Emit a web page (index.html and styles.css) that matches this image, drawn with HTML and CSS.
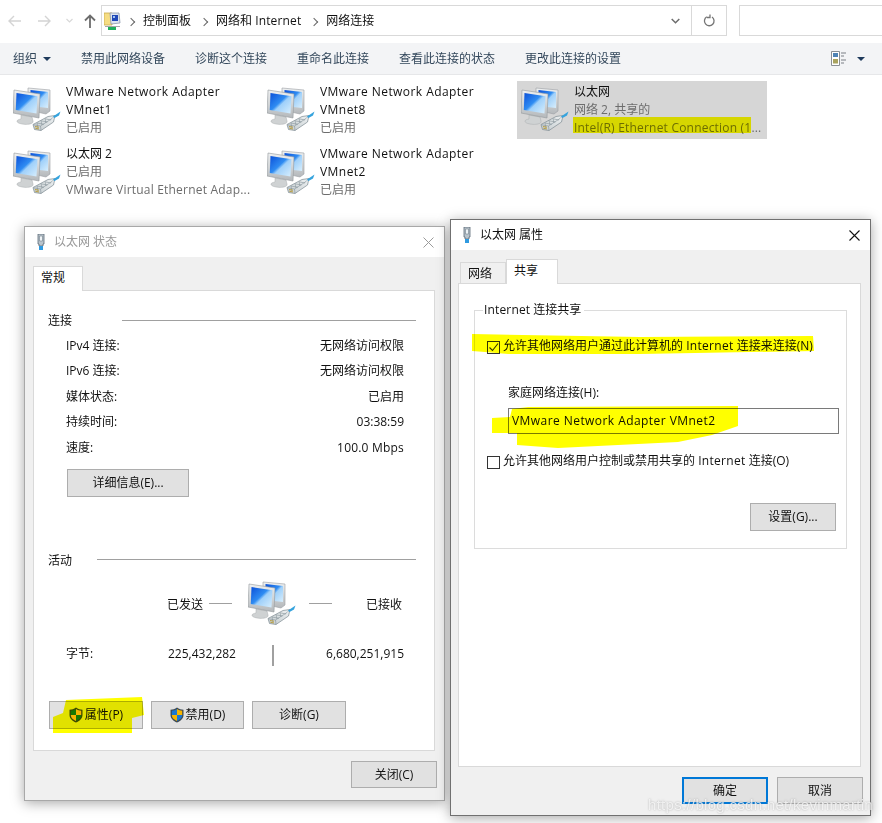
FILE: index.html
```html
<!DOCTYPE html>
<html lang="zh-CN">
<head>
<meta charset="utf-8">
<title>网络连接</title>
<link rel="stylesheet" href="styles.css">
</head>
<body>
<svg class="sprite" width="0" height="0" aria-hidden="true">
  <defs>
    <linearGradient id="scr" x1="0" y1="0" x2="1" y2="1">
      <stop offset="0" stop-color="#0a4fd8"/><stop offset=".45" stop-color="#2f8cf2"/><stop offset=".55" stop-color="#9fd0fa"/><stop offset="1" stop-color="#d8eefc"/>
    </linearGradient>
    <linearGradient id="frm" x1="0" y1="0" x2="0" y2="1">
      <stop offset="0" stop-color="#eef0f1"/><stop offset="1" stop-color="#b4b8bb"/>
    </linearGradient>
    <linearGradient id="plg" x1="0" y1="1" x2="1" y2="0">
      <stop offset="0" stop-color="#c3cbce"/><stop offset="1" stop-color="#eef1f2"/>
    </linearGradient>
    <symbol id="net" viewBox="0 0 48 48">
      <path d="M15 2 37 4 37 25 33 28 15 24Z" fill="url(#frm)" stroke="#9a9ea2" stroke-width=".6"/>
      <path d="M17.5 4 35 6 35 22 17.5 20Z" fill="url(#scr)"/>
      <path d="M8 29 19 31 20 35 C21 38 14 39 9 38 C3 37 2 34 8 33Z" fill="#cfd2d3" stroke="#a9acae" stroke-width=".5"/>
      <path d="M1 4 27 8 26 32 0 27Z" fill="url(#frm)" stroke="#94989c" stroke-width=".6"/>
      <path d="M3.5 7 24.5 10.200 23.500 27.500 2.800 24Z" fill="url(#scr)"/>
      <path d="M20 38.500 35 30.500 42 29.500 40.500 36 28 44.500 21.500 43.500Z" fill="url(#plg)" stroke="#7d8a90" stroke-width=".7"/>
      <path d="M20.500 38.800 27.500 40 28 44.500M27.500 40 39 32.500 42 29.500M24 37 31 38.300M28 34.800 34.500 36M32 32.800 38 34M24 37 24.800 42M28 34.800 29 39M32 32.800 33 37" fill="none" stroke="#87949a" stroke-width=".6"/>
      <path d="M22 40.500 26 41.200M22.300 42.200 26 43" stroke="#b9a046" stroke-width="1"/>
      <path d="M40 30.500 47.500 25.500 46 29.500 41.500 32Z" fill="#35a3dd"/>
    </symbol>
    <symbol id="plug" viewBox="0 0 10 16">
      <path d="M2 0H8V10H7V12H3V10H2Z" fill="#b9c4cc" stroke="#5c6b76" stroke-width=".8"/>
      <path d="M3.500 2H6.500V7H3.500Z" fill="#eef3f6" stroke="#71808a" stroke-width=".6"/>
      <path d="M3 12H7V16H3Z" fill="#2f9ae0"/>
    </symbol>
    <symbol id="shield" viewBox="0 0 14 16">
      <path d="M7 .5C9 2 11.500 2.700 13.500 2.700V8C13.500 11.500 10.500 14 7 15.500 3.500 14 .5 11.500 .5 8V2.700C2.500 2.700 5 2 7 .5Z" fill="#3d4a55"/>
      <path d="M7 2V8H1.800V3.700C3.500 3.600 5.500 3 7 2Z" fill="#1a78d2"/>
      <path d="M7 2C8.500 3 10.500 3.600 12.200 3.700V8H7Z" fill="#f7b500"/>
      <path d="M1.800 8H7V14C4.300 12.800 1.800 11 1.800 8Z" fill="#f7b500"/>
      <path d="M7 8H12.200C12.200 11 9.700 12.800 7 14Z" fill="#1a78d2"/>
    </symbol>
  </defs>
</svg>

<main class="desktop">
  <header class="addressbar">
    <nav class="nav">
      <svg class="nav-back" width="14" height="12" viewBox="0 0 14 12"><path d="M6 1 1 6 6 11M1 6H13" fill="none" stroke="#d4d4d4" stroke-width="1.400"/></svg>
      <svg class="nav-fwd" width="14" height="12" viewBox="0 0 14 12"><path d="M8 1 13 6 8 11M13 6H1" fill="none" stroke="#d4d4d4" stroke-width="1.400"/></svg>
      <svg class="nav-down" width="7" height="5" viewBox="0 0 7 5"><path d="M.5 1 3.500 4 6.500 1" fill="none" stroke="#d8d8d8" stroke-width="1.200"/></svg>
      <svg class="nav-up" width="12" height="14" viewBox="0 0 12 14"><path d="M1 6.500 6 1.500 11 6.500M6 2V14" fill="none" stroke="#6d6d6d" stroke-width="1.800"/></svg>
    </nav>
    <div class="address">
      <svg class="addr-icon" width="17" height="18" viewBox="0 0 17 18">
        <path d="M0 1H8V13H0Z" fill="#f6dd83" stroke="#c9a94b" stroke-width=".8"/>
        <path d="M6 1H15L16 11 7 12Z" fill="#dbe3ef" stroke="#8c98ad" stroke-width=".8"/>
        <path d="M8 3H14V9H8Z" fill="#1f47b8"/>
        <path d="M9 4H11V6H9Z" fill="#9fc4f2"/>
        <path d="M1 14H16V15H1Z" fill="#a8a8a8"/>
        <path d="M4 15H12V18H4Z" fill="#1faf5c"/>
      </svg>
      <ol class="crumbs">
        <li class="crumb">控制面板</li>
        <li class="crumb">网络和 <span class="lat-s">Internet</span></li>
        <li class="crumb">网络连接</li>
      </ol>
      <svg class="addr-chev" width="9" height="6" viewBox="0 0 9 6"><path d="M.7 1 4.500 4.800 8.300 1" fill="none" stroke="#6d6d6d" stroke-width="1.500"/></svg>
      <div class="refresh">
        <svg width="12" height="13" viewBox="0 0 12 13"><path d="M8.200 2.800A4.800 4.800 0 1 1 3 3M5 .5V3.500H8" transform="matrix(-1 0 0 1 12 0)" fill="none" stroke="#757575" stroke-width="1.300"/></svg>
      </div>
    </div>
    <div class="search"></div>
  </header>

  <div class="toolbar">
    <span class="tool tool-org">组织<i class="caret"></i></span>
    <span class="tool">禁用此网络设备</span>
    <span class="tool">诊断这个连接</span>
    <span class="tool">重命名此连接</span>
    <span class="tool">查看此连接的状态</span>
    <span class="tool">更改此连接的设置</span>
    <span class="tool-view">
      <svg width="16" height="15" viewBox="0 0 16 15">
        <path d="M.5.5H8.500V14.500H.5Z" fill="#fff" stroke="#8a8f94"/>
        <path d="M2 2H7V6H2Z" fill="#4f83b5"/><path d="M2 8H7V12.500H2Z" fill="#a9a35e"/>
        <path d="M10 2H15M10 5H13M10 9H15M10 12H13" stroke="#7a7f85"/>
      </svg>
      <i class="caret"></i>
    </span>
  </div>

  <section class="connections">
    <article class="conn">
      <svg class="conn-icon"><use href="#net"/></svg>
      <div class="conn-text"><div class="lat">VMware Network Adapter</div><div class="lat">VMnet1</div><div class="muted">已启用</div></div>
    </article>
    <article class="conn">
      <svg class="conn-icon"><use href="#net"/></svg>
      <div class="conn-text"><div class="lat">VMware Network Adapter</div><div class="lat">VMnet8</div><div class="muted">已启用</div></div>
    </article>
    <article class="conn conn-selected">
      <svg class="conn-icon"><use href="#net"/></svg>
      <div class="conn-text"><div>以太网</div><div class="muted">网络 2, 共享的</div><div class="muted lat-m">Intel(R) Ethernet Connection (1...</div></div>
    </article>
    <article class="conn conn-low">
      <svg class="conn-icon"><use href="#net"/></svg>
      <div class="conn-text"><div>以太网 2</div><div class="muted">已启用</div><div class="muted lat-m">VMware Virtual Ethernet Adap...</div></div>
    </article>
    <article class="conn conn-low">
      <svg class="conn-icon"><use href="#net"/></svg>
      <div class="conn-text"><div class="lat">VMware Network Adapter</div><div class="lat">VMnet2</div><div class="muted">已启用</div></div>
    </article>
  </section>

  <section class="dialog dialog-status">
    <div class="titlebar titlebar-inactive">
      <svg class="title-icon"><use href="#plug"/></svg>
      <span class="title-text">以太网 状态</span>
      <svg class="title-close" width="11" height="11" viewBox="0 0 11 11"><path d="M.5.5 10.500 10.500M10.500.5 .5 10.500" stroke="#9a9a9a"/></svg>
    </div>
    <div class="tabs tabs-status"><span class="tab tab-active">常规</span></div>
    <div class="panel panel-status">
      <div class="group-head"><span class="group-name name-conn">连接</span><span class="rule"></span></div>
      <dl class="stats">
        <div class="stat"><dt>IPv4 连接:</dt><dd>无网络访问权限</dd></div>
        <div class="stat"><dt>IPv6 连接:</dt><dd>无网络访问权限</dd></div>
        <div class="stat"><dt>媒体状态:</dt><dd>已启用</dd></div>
        <div class="stat"><dt>持续时间:</dt><dd>03:38:59</dd></div>
        <div class="stat"><dt>速度:</dt><dd class="lat-m">100.0 Mbps</dd></div>
      </dl>
      <button class="btn btn-details">详细信息(E)...</button>
      <div class="group-head group-activity"><span class="group-name name-act">活动</span><span class="rule"></span></div>
      <div class="traffic">
        <span class="traffic-label">已发送</span>
        <span class="dash dash-left"></span>
        <svg class="traffic-icon"><use href="#net"/></svg>
        <span class="dash dash-right"></span>
        <span class="traffic-label traffic-recv">已接收</span>
      </div>
      <div class="bytes">
        <span class="bytes-label">字节:</span>
        <span class="bytes-sent">225,432,282</span>
        <span class="bytes-sep"></span>
        <span class="bytes-recv">6,680,251,915</span>
      </div>
      <div class="actions">
        <button class="btn btn-act"><svg class="shield"><use href="#shield"/></svg>属性(P)</button>
        <button class="btn btn-act btn-mid"><svg class="shield"><use href="#shield"/></svg>禁用(D)</button>
        <button class="btn btn-act">诊断(G)</button>
      </div>
    </div>
    <div class="footer footer-status"><button class="btn btn-foot">关闭(C)</button></div>
  </section>

  <section class="dialog dialog-props">
    <div class="titlebar">
      <svg class="title-icon"><use href="#plug"/></svg>
      <span class="title-text title-active">以太网 属性</span>
      <svg class="title-close" width="11" height="11" viewBox="0 0 11 11"><path d="M.5.5 10.500 10.500M10.500.5 .5 10.500" stroke="#111" stroke-width="1.100"/></svg>
    </div>
    <div class="tabs tabs-props"><span class="tab tab-idle">网络</span><span class="tab tab-active tab-share">共享</span></div>
    <div class="panel panel-props">
      <fieldset class="share">
        <legend class="share-legend"><span class="lat-s">Internet</span> 连接共享</legend>
        <label class="check check-first"><span class="box box-on"><svg width="11" height="11" viewBox="0 0 11 11"><path d="M1.500 5.500 4.500 8.500 10 1.500" fill="none" stroke="#333" stroke-width="1.100"/></svg></span>允许其他网络用户通过此计算机的 <span class="lat-w">Internet</span> 连接来连接(N)</label>
        <div class="home-label">家庭网络连接(H):</div>
        <div class="home-input lat">VMware Network Adapter VMnet2</div>
        <label class="check check-second"><span class="box"></span>允许其他网络用户控制或禁用共享的 <span class="lat-w">Internet</span> 连接(O)</label>
        <button class="btn btn-settings">设置(G)...</button>
      </fieldset>
    </div>
    <div class="footer footer-props">
      <button class="btn btn-foot btn-default">确定</button>
      <button class="btn btn-foot">取消</button>
    </div>
  </section>

  <svg class="marker" width="882" height="823" viewBox="0 0 882 823" aria-hidden="true">
    <path class="ink" d="M66 700 142 697 144 715 132 718 132 733 53 733 53 717 63 713Z"/>
    <path class="ink" d="M472 334 640 337 813 336 814 351 640 354 508 354 485 352 472 351Z"/>
    <path class="ink" d="M528 407 738 406 738 426 712 435 678 442 558 448 517 445 517 433 492 433 492 418 510 417 512 409Z"/>
    <path class="ink" d="M573 117H751V133H573Z"/>
  </svg>

  <div class="watermark">https://blog.csdn.net/kevinmartin</div>
</main>
</body>
</html>
```

FILE: styles.css
```css
* { box-sizing: border-box; }
html, body { margin: 0; padding: 0; background: #fff; }
body {
  font-family: "Open Sans", "Noto Sans CJK SC", sans-serif;
  font-size: 12px;
  line-height: 18px;
  color: #111;
}
.sprite { position: absolute; }
.desktop { position: relative; width: 882px; height: 823px; overflow: hidden; }
.lat { letter-spacing: .44px; }
.lat-m { letter-spacing: .2px; }
.lat-s { letter-spacing: .15px; }
.lat-w { letter-spacing: .3px; }
.muted { color: #6d6d6d; }

/* address bar */
.addressbar { display: flex; height: 43px; padding-top: 5px; }
.nav { position: relative; display: flex; align-items: center; width: 101px; height: 31px; padding-left: 8px; }
.nav-fwd { margin-left: 15px; }
.nav-down { margin-left: 15px; }
.nav-up { margin-left: 11px; }
.address { display: flex; align-items: center; width: 626px; height: 31px; border: 1px solid #d9d9d9; padding-left: 2px; }
.addr-icon { flex: none; }
.crumbs { display: flex; list-style: none; margin: 0; padding: 0; flex: 1; }
.crumb { position: relative; margin-left: 22px; }
.crumb + .crumb { margin-left: 25px; }
.crumb::before {
  content: "";
  position: absolute;
  left: -15px; top: 7px;
  width: 5px; height: 5px;
  border-top: 1px solid #666;
  border-right: 1px solid #666;
  transform: rotate(45deg);
}
.addr-chev { margin-right: 11px; }
.refresh { display: flex; align-items: center; justify-content: center; width: 35px; height: 100%; border-left: 1px solid #d9d9d9; }
.search { width: 143px; height: 31px; margin-left: 12px; border: 1px solid #d9d9d9; border-right: 0; }

/* toolbar */
.toolbar { display: flex; align-items: center; gap: 30px; height: 32px; padding: 0 17px 0 13px; background: #f3f4f6; border-bottom: 1px solid #e6e7e9; color: #33475b; }
.tool-org { display: flex; align-items: center; width: 38px; }
.caret { display: inline-block; width: 0; height: 0; border: 4px solid transparent; border-top: 4px solid #1f3a5c; border-bottom: 0; }
.tool-org .caret { margin-left: 6px; }
.tool-view { display: flex; align-items: center; margin-left: auto; gap: 10px; }

/* connection tiles */
.connections { display: grid; grid-template-columns: repeat(3, 250px); grid-auto-rows: 58px; gap: 5px 4px; padding: 6px 0 0 9px; }
.conn { display: flex; padding: 2px 0 0 4px; }
.conn-low { padding-top: 1px; }
.conn-low .conn-icon { margin-top: 4px; }
.conn-selected { background: #d6d6d6; }
.conn-icon { flex: none; width: 48px; height: 48px; margin: 3px 5px 0 0; }
.conn-text { white-space: nowrap; }

/* dialogs: windows on a desktop */
.dialog { position: absolute; display: flex; flex-direction: column; width: 421px; background: #f0f0f0; box-shadow: 0 2px 12px rgba(0,0,0,.35); }
.dialog-status { left: 24px; top: 226px; height: 575px; border: 1px solid #a8a8a8; }
.dialog-props { left: 450px; top: 219px; height: 597px; border: 1px solid #707070; }
.titlebar { display: flex; align-items: center; flex: none; height: 30px; background: #fff; padding: 0 10px 0 11px; }
.title-icon { width: 10px; height: 16px; margin-right: 8px; }
.titlebar-inactive { height: 30px; color: #999; }
.title-text { flex: 1; }
.title-active { color: #111; }
.tabs { display: flex; align-items: flex-end; flex: none; }
.tabs-status { height: 33px; padding-left: 8px; }
.tabs-props { height: 33px; padding-left: 9px; }
.tab { display: block; margin-bottom: -1px; position: relative; border: 1px solid #d9d9d9; border-bottom: 0; padding: 0 7px; line-height: 21px; }
.tab-active { height: 25px; width: 50px; background: #fff; z-index: 1; }
.tab-idle { height: 22px; width: 46px; background: #f0f0f0; }
.tab-share { width: 52px; height: 25px; padding-left: 7px; }
.panel { position: relative; flex: none; background: #fff; border: 1px solid #d9d9d9; }
.panel-status { display: flex; flex-direction: column; width: 402px; height: 461px; margin-left: 8px; padding: 20px 18px 0 14px; }
.panel-props { width: 403px; height: 484px; margin-left: 7px; padding: 17px 13px 0 15px; }

.group-head { display: flex; align-items: center; height: 18px; }
.group-name { padding-top: 2px; }
.name-conn { width: 74px; }
.name-act { width: 49px; }
.rule { flex: 1; height: 1px; background: #a0a0a0; }
.stats { margin: 4px 0 0; padding: 0 12px 0 18px; }
.stat { display: flex; justify-content: space-between; align-items: center; height: 25.5px; }
.stat dt, .stat dd { margin: 0; }

.btn { display: block; margin: 0; padding: 0; font: inherit; color: #111; background: #e1e1e1; border: 1px solid #adadad; }
.btn-details { width: 122px; height: 28px; margin: 8px 0 0 19px; }
.group-activity { margin-top: 54px; }
.traffic { display: flex; align-items: center; height: 48px; margin-top: 11px; padding: 0 14px 0 119px; }
.traffic-label { width: 36px; padding-top: 2px; }
.traffic-recv { margin-left: auto; }
.dash { width: 23px; height: 1px; background: #a0a0a0; }
.dash-left { margin-left: 6px; }
.traffic-icon { width: 48px; height: 48px; margin-left: 16px; }
.dash-right { margin-left: 13px; }
.bytes { display: flex; height: 21px; margin-top: 17px; padding: 0 12px 0 18px; }
.bytes-label { width: 102px; }
.bytes-sent { width: 104px; }
.bytes-sep { width: 2px; height: 21px; background: #a0a0a0; }
.bytes-recv { margin-left: auto; }
.actions { display: flex; gap: 8px; margin: 35px 0 0 1px; }
.btn-act { display: flex; align-items: center; justify-content: center; width: 94px; height: 28px; }
.btn-mid { width: 93px; }
.shield { width: 14px; height: 16px; margin-right: 2px; }

.footer { display: flex; justify-content: flex-end; flex: none; margin-top: 10px; }
.footer-status { padding-right: 7px; }
.footer-props { gap: 9px; padding-right: 7px; }
.btn-foot { width: 86px; height: 27px; }
.btn-default { border: 2px solid #0078d7; }

.share { display: flex; flex-direction: column; align-items: flex-start; width: 373px; height: 248px; margin: 0; padding: 0 0 0 12px; border: 1px solid #dcdcdc; min-width: 0; }
.share-legend { margin-left: -4px; padding: 0 3px 0 1px; line-height: 18px; height: 18px; }
.check { display: flex; align-items: center; height: 18px; white-space: pre; }
.check-first { margin-top: 18px; }
.check-second { margin-top: 18px; }
.box { display: flex; align-items: center; justify-content: center; flex: none; width: 13px; height: 13px; margin: 2px 3px 0 0; background: #fff; border: 1px solid #333; }
.box-on { mix-blend-mode: multiply; }
.home-label { margin: 29px 0 0 21px; }
.home-input { width: 331px; height: 26px; margin: 6px 0 0 21px; padding: 3px 0 0 3px; background: #fff; border: 1px solid #7a7a7a; }
.btn-settings { width: 86px; height: 28px; margin: 33px 0 0 263px; }

/* overlays */
.marker { position: absolute; left: 0; top: 0; pointer-events: none; mix-blend-mode: multiply; }
.ink { fill: #ffff00; }
.watermark {
  position: absolute;
  left: 648px; top: 794px;
  font: 15px/22px "Liberation Sans", sans-serif;
  letter-spacing: .3px;
  color: rgba(255,255,255,.75);
  text-shadow: 0 0 2px rgba(120,120,120,.6);
  white-space: nowrap;
}
```
